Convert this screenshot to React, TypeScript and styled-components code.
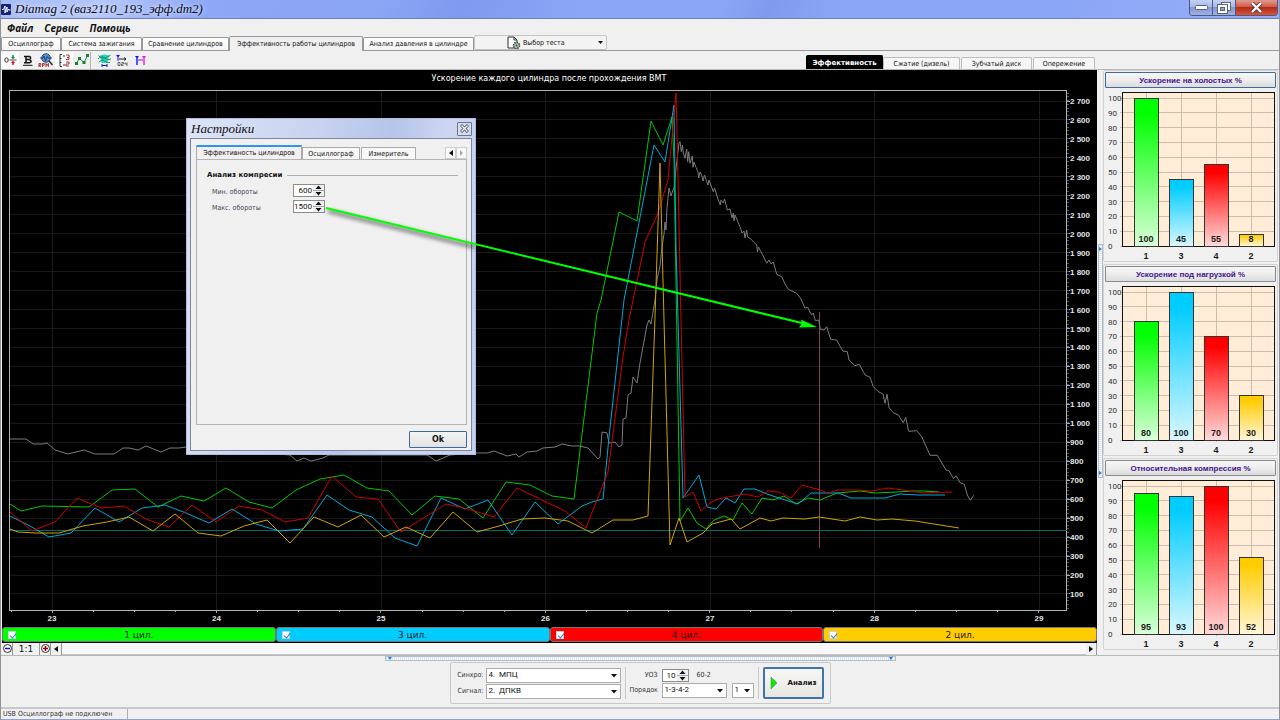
import React from 'react';
import styled, { createGlobalStyle } from 'styled-components';

const GlobalStyle = createGlobalStyle`
  * { box-sizing: border-box; }
  body { margin: 0; background: #f0f0f0; }
  button, input, select { font: inherit; color: inherit; margin: 0; }
`;

const ui = '"DejaVu Sans Condensed", "DejaVu Sans", Tahoma, sans-serif';
const sans = '"Liberation Sans", Arial, sans-serif';
const narrow = 'Roboto, "Liberation Sans", sans-serif';
const wide = '"DejaVu Sans", Verdana, sans-serif';
const script = '"Liberation Serif", "Times New Roman", serif';

const Window = styled.div`
  display: flex;
  flex-direction: column;
  min-height: 100vh;
  background: #f0f0f0;
  border-left: 1px solid #8f9196;
  border-right: 1px solid #8f9196;
  font: 7px/10px ${ui};
  color: #111;
`;

const TitleBar = styled.header`
  display: flex;
  align-items: center;
  justify-content: space-between;
  height: 19px;
  padding-right: 1px;
  border-bottom: 1px solid #6d80b3;
  background: linear-gradient(115deg, #a9bdf5 0%, #b4c6fa 8%, #8ea7f6 16%, #8ba5f5 30%, #7f9aee 36%, #8ca6f7 46%, #8ca6f7 56%, #809bee 60%, #8ca6f7 66%, #8ca6f7 82%, #96aef8 100%);
`;
const AppTitle = styled.h1`
  display: flex;
  align-items: center;
  gap: 4px;
  margin: 0;
  font: italic 13px/18px ${script};
  color: #0a0a14;
  text-shadow: 0 0 5px #fff;
`;
const WindowButtons = styled.div`
  display: flex;
  align-self: flex-start;
  border: 1px solid #4d5a80;
  border-top: 0;
  border-radius: 0 0 4px 4px;
  overflow: hidden;
`;
const WindowButton = styled.button<{ $wide?: boolean; $danger?: boolean }>`
  display: grid;
  place-items: center;
  width: ${p => (p.$wide ? 41 : 23)}px;
  height: 15px;
  padding: 0;
  border: 0;
  border-right: ${p => (p.$danger ? 0 : 1)}px solid #4d5a80;
  background: ${p => (p.$danger
    ? 'linear-gradient(#e09c90, #cf5b48 45%, #b32c18 50%, #d4553a)'
    : 'linear-gradient(#c4d0f4, #a9b9ea 45%, #8296cf 50%, #9fb0e6)')};
`;

const MenuBar = styled.nav`
  display: flex;
  gap: 11px;
  height: 17px;
  padding-left: 6px;
  font: italic bold 10px/16px "Open Sans", sans-serif;
`;
const MenuItem = styled.button`
  padding: 0;
  border: 0;
  background: none;
  color: #111;
`;

const TabStrip = styled.div`
  display: flex;
  align-items: flex-end;
  height: 15px;
  border-bottom: 1px solid #9a9a9a;
`;
const ModeTab = styled.button<{ $active?: boolean; $width: number }>`
  flex: 0 0 ${p => p.$width}px;
  height: ${p => (p.$active ? 15 : 13)}px;
  padding: 0;
  border: 1px solid #989898;
  border-bottom: 0;
  border-radius: 2px 2px 0 0;
  margin-bottom: ${p => (p.$active ? -1 : 0)}px;
  background: ${p => (p.$active ? '#f0f0f0' : 'linear-gradient(#fff, #f4f4f4)')};
  white-space: nowrap;
`;
const TestPicker = styled.button`
  display: flex;
  align-items: center;
  gap: 2px;
  width: 133px;
  height: 15px;
  padding: 0 3px 0 32px;
  border: 1px solid #c4c4c4;
  border-radius: 2px;
  background: #f3f3f3;
  span { flex: 1; text-align: left; }
`;

const ToolRow = styled.div`
  display: flex;
  align-items: flex-end;
  justify-content: space-between;
  height: 19px;
  padding-right: 183px;
  border-bottom: 1px solid #b8b8b8;
`;
const Tools = styled.div`
  display: flex;
  align-self: center;
`;
const ToolButton = styled.button<{ $on?: boolean; $gap?: boolean }>`
  display: grid;
  place-items: center;
  width: 18px;
  height: 17px;
  padding: 0;
  border: 0;
  border-right: ${p => (p.$gap ? '1px solid #b0b0b0' : 0)};
  margin-right: ${p => (p.$gap ? 4 : 0)}px;
  background: ${p => (p.$on ? '#fbfbfb' : 'none')};
`;
const ViewTabs = styled.div`
  display: flex;
  align-items: flex-end;
`;
const ViewTab = styled.button<{ $active?: boolean; $width: number }>`
  width: ${p => p.$width}px;
  height: ${p => (p.$active ? 14 : 12)}px;
  padding: 0;
  margin-right: ${p => (p.$active ? 0 : 1)}px;
  border: 1px solid ${p => (p.$active ? '#000' : '#bdbdbd')};
  border-bottom: 0;
  border-radius: 2px 2px 0 0;
  background: ${p => (p.$active ? '#000' : '#f6f6f6')};
  color: ${p => (p.$active ? '#fff' : '#111')};
  font-family: ${p => (p.$active ? wide : ui)};
  font-weight: ${p => (p.$active ? 'bold' : 'normal')};
  white-space: nowrap;
`;

const Main = styled.main`
  display: grid;
  grid-template-columns: minmax(0, 1fr) 6px 175px;
  padding: 0 1px;
`;
const ChartColumn = styled.section`
  display: flex;
  flex-direction: column;
  min-width: 0;
`;
const Scope = styled.div`
  position: relative;
  background: #000;
`;
const ScopeSvg = styled.svg`
  display: block;
  width: 100%;
  height: auto;
`;
const ArrowSvg = styled.svg`
  position: absolute;
  inset: 0;
  width: 100%;
  height: 100%;
  pointer-events: none;
`;

const ChannelRow = styled.div`
  display: grid;
  grid-template-columns: repeat(4, 1fr);
  background: #000;
  padding-bottom: 1px;
`;
const Channel = styled.label<{ $color: string }>`
  display: grid;
  grid-template-columns: 8px 1fr 8px;
  align-items: center;
  height: 15px;
  padding: 0 5px;
  border: 1px solid #777;
  border-radius: 3px;
  background: ${p => p.$color};
  font: 9px/12px ${wide};
  color: #1c1c1c;
  text-align: center;
`;
const Check = styled.input`
  appearance: none;
  position: relative;
  width: 8px;
  height: 8px;
  background: #fff;
  border: 1px solid #c4d0dc;
  &:checked::after {
    content: '';
    position: absolute;
    left: 2px;
    top: 0;
    width: 3px;
    height: 5px;
    border: solid #1d7fe0;
    border-width: 0 1px 1px 0;
    transform: rotate(40deg);
  }
`;
const ZoomRow = styled.div`
  display: flex;
  align-items: center;
  height: 12px;
  background: #f8f8f8;
  border-bottom: 1px solid #c4c4c4;
`;
const ZoomButton = styled.button<{ $width?: number }>`
  display: grid;
  place-items: center;
  width: ${p => p.$width ?? 11}px;
  height: 12px;
  padding: 0;
  border: 0;
  border-right: 1px solid #999;
  background: #f0f0f0;
  font: 9px/10px ${wide};
`;
const Spacer = styled.div`
  flex: 1;
`;

const VerticalGrip = styled.div`
  align-self: center;
  justify-self: center;
  display: flex;
  flex-direction: column;
  justify-content: space-between;
  width: 5px;
  height: 234px;
  margin-bottom: 4px;
  border: 1px solid #b4bcc4;
  background: repeating-linear-gradient(#d6e6f5 0 1px, #fafcfe 1px 2px);
`;
const SideColumn = styled.aside`
  display: flex;
  flex-direction: column;
  gap: 2px;
`;
const BarCard = styled.section`
  padding: 1px;
  border: 1px solid #d2d2d2;
  border-radius: 2px;
`;
const BarTitle = styled.button<{ $focus?: boolean }>`
  display: block;
  width: 100%;
  height: 16px;
  padding: 0;
  border: 1px solid ${p => (p.$focus ? '#3c6c9c' : '#8a8a8a')};
  border-radius: 1px;
  background: linear-gradient(#f6f6f6, #ededed 50%, #dcdcdc);
  color: #43148c;
  font: bold 8px/13px ${sans};
`;
const BarSvg = styled.svg`
  display: block;
  width: 100%;
  height: auto;
`;

const Dialog = styled.section`
  position: absolute;
  left: 184px;
  top: 48px;
  width: 290px;
  height: 337px;
  padding: 0 3px 3px;
  display: flex;
  flex-direction: column;
  background: linear-gradient(100deg, #dde4f6 0%, #c7d2f0 40%, #b7c4e8 60%, #ccd6f3 75%, #c3cff0 100%);
  border: 1px solid #b0bce0;
`;
const DialogHead = styled.div`
  display: flex;
  align-items: center;
  justify-content: space-between;
  height: 19px;
  padding-left: 1px;
`;
const DialogTitle = styled.h2`
  margin: 0;
  font: italic 13px/18px ${script};
  color: #111;
`;
const DialogClose = styled.button`
  display: grid;
  place-items: center;
  width: 15px;
  height: 14px;
  padding: 0;
  border: 1px solid #6f7688;
  border-radius: 1px;
  background: #d5dcf0;
`;
const DialogBody = styled.div`
  flex: 1;
  display: flex;
  flex-direction: column;
  align-items: flex-end;
  gap: 6px;
  padding: 6px 4px 2px 5px;
  border: 1px solid #7e8596;
  background: #f0f0f0;
`;
const DialogTabs = styled.div`
  display: flex;
  align-self: stretch;
  align-items: flex-end;
  height: 14px;
`;
const DialogTab = styled.button<{ $active?: boolean; $width: number }>`
  width: ${p => p.$width}px;
  height: ${p => (p.$active ? 14 : 12)}px;
  padding: 0;
  border: 1px solid #ababab;
  border-top: ${p => (p.$active ? '2px solid #2f93f0' : '1px solid #ababab')};
  border-bottom: 0;
  border-radius: 1px 1px 0 0;
  margin-right: ${p => (p.$active ? 0 : 1)}px;
  background: ${p => (p.$active ? '#f0f0f0' : '#f8f8f8')};
  line-height: 10px;
  white-space: nowrap;
`;
const PageButton = styled.button`
  display: grid;
  place-items: center;
  width: 11px;
  height: 12px;
  padding: 0;
  border: 1px solid #cfcfcf;
  background: #f8f8f8;
`;
const DialogPage = styled.div`
  flex: 1;
  align-self: stretch;
  display: flex;
  flex-direction: column;
  margin-top: -6px;
  padding: 10px 8px 8px 10px;
  border: 1px solid #b4b4b4;
`;
const GroupHead = styled.h3`
  display: flex;
  align-items: center;
  gap: 5px;
  margin: 0 0 2px;
  font: bold 7px/10px ${wide};
  color: #111;
  &::after { content: ''; flex: 1; border-top: 1px solid #b0b0b0; }
`;
const SettingRow = styled.div`
  display: flex;
  align-items: center;
  height: 16px;
  padding-left: 5px;
  label { width: 81px; padding-top: 4px; color: #444455; }
`;
const SpinBox = styled.div<{ $width: number }>`
  display: flex;
  width: ${p => p.$width}px;
  height: 13px;
  border: 1px solid #8c8c8c;
  background: #fff;
  input {
    appearance: textfield;
    flex: 1;
    min-width: 0;
    width: 100%;
    padding: 0 1px 0 0;
    border: 0;
    outline: 0;
    background: none;
    font: 8px/11px ${narrow};
    color: #111;
    text-align: right;
  }
  input::-webkit-inner-spin-button { display: none; }
`;
const SpinArrows = styled.svg`
  flex: none;
  width: 11px;
  height: 11px;
  background: #f0f0f0;
`;
const OkButton = styled.button`
  width: 58px;
  height: 17px;
  padding: 0;
  border: 1px solid #3c6c9c;
  border-radius: 1px;
  background: linear-gradient(#f4f4f4, #e2e2e2);
  font: bold 8px/14px ${wide};
`;

const Footer = styled.section`
  flex: 1;
  display: flex;
  flex-direction: column;
  align-items: center;
  border-top: 1px solid #b8b8b8;
  border-bottom: 2px solid #c8c8c8;
`;
const HorizontalGrip = styled.div`
  display: flex;
  justify-content: space-between;
  width: 511px;
  height: 5px;
  border: 1px solid #b4bcc4;
  background: repeating-linear-gradient(90deg, #d6e6f5 0 1px, #fafcfe 1px 2px);
`;
const Controls = styled.form`
  display: flex;
  align-items: center;
  gap: 4px;
  width: 381px;
  height: 42px;
  margin-top: 1px;
  padding: 2px 4px 2px 6px;
  border: 1px solid #c8c8c8;
  border-radius: 2px;
`;
const FieldGrid = styled.div<{ $columns: string; $gap: number }>`
  display: grid;
  grid-template-columns: ${p => p.$columns};
  align-items: center;
  gap: 1px ${p => p.$gap}px;
  label { color: #333; text-align: right; white-space: nowrap; }
`;
const Inline = styled.div`
  display: flex;
  align-items: center;
  gap: 5px;
  color: #333;
  span { padding-left: 3px; }
`;
const SelectWrap = styled.div<{ $width: number }>`
  position: relative;
  width: ${p => p.$width}px;
  select {
    appearance: none;
    display: block;
    width: 100%;
    height: 15px;
    padding: 0 2px;
    border: 1px solid #acacac;
    border-radius: 0;
    background: #fff;
    font: 8px/12px ${narrow};
    color: #111;
  }
  svg { position: absolute; right: 4px; top: 6px; pointer-events: none; }
`;
const Divider = styled.div`
  width: 1px;
  height: 32px;
  background: #c8c8c8;
`;
const AnalyzeButton = styled.button`
  display: flex;
  align-items: center;
  gap: 10px;
  width: 61px;
  height: 32px;
  padding: 0 0 0 5px;
  border: 2px solid #3f74a8;
  border-radius: 2px;
  background: linear-gradient(#f7f7f5, #e6e5df);
  font: bold 7px/10px ${wide};
`;
const StatusBar = styled.footer`
  display: flex;
  height: 11px;
  border-bottom: 1px solid #8f9fd8;
`;
const StatusCell = styled.div`
  width: 127px;
  padding-left: 2px;
  border-right: 1px solid #b0b0b0;
  color: #333;
`;

const X0 = 52;
const XSTEP = 164.5;
const Y2700 = 101;
const YSTEP = 18.96;

const rpmTrace = '10,439 26,439 33,444 43,444 47,443 55,450 68,454 84,450 95,454 114,454 123,448 129,448 138,450 146,446 161,452 170,448 179,448 186,447 290,455 297,461 304,458 311,461 323,458 329,455 427,455 436,461 443,458 450,455 475,453 487,453 494,451 507,456 516,454 519,457 527,452 537,451 543,448 555,447 562,444 572,446 580,446 588,448 598,459 600,457 602,432 607,433 609,443 615,442 619,447 622,445 623,419 626,418 628,395 631,393 633,377 637,383 640,363 647,325 649,320 651,324 655,300 657,280 660,266 662,247 664,234 665,222 666,230 667,208 669,188 671,196 673,190 674,188 677,160 679,143 680,141.7 681.3,151.7 682.5,145 683.3,153 685,158.3 686.7,149 687.7,161.7 688.7,151.7 690,163.3 692.3,156 693,167.3 694,162 696,167.3 698,172 698.7,178 700,172 702,176 703,181 704.5,175 706.7,181.7 708,185 709,180 713.3,191.7 714.5,188 718.3,200 720.3,205 721,200 723.3,203 724.5,199 727.3,210 730,209 732,218 733.3,213 734,221 735,215 740,226.7 742,233 744,231 745,238 746.7,230 747.5,237 750,238.3 756.7,245 757.5,252 758.3,247 762.7,255 766.7,263.3 769,260 771,264 773.3,262 775,268 776.7,274.3 781.7,276.7 785,284 788.3,289.3 796.7,293.3 801,299 805,308.3 807.7,307.3 810,312 811.5,315 813.3,313 815.3,320.7 818.7,320 820.3,329.3 824,330 826.7,326.7 830.7,339.3 836.7,340 842.7,351 847.3,351.7 849,360 855,365.7 859.3,364.3 865,375 870,377.3 873.3,386.7 878.3,391.7 883,394 885,403.3 887,394.3 889,407.7 893.3,412.7 898.3,415 903.3,422.7 905.7,417.3 908.7,431.3 916.7,430.7 921.7,436.7 930,455.3 937.3,455.3 946,470 949,470.7 953.3,478.3 956.3,475.7 960,482.7 964.3,484.3 967.3,495 970.3,500.3 973.7,495.3';

const traces = [
  { color: '#00c800', points: '10,504 21,511 42,506 89,507 112,490 135,489 158,507 181,496 204,501 226,488 249,502 272,508 296,490 320,479 344,475 367,488 389,491 412,515 435,496 459,499 483,518 506,482 530,485 552,496 574,499 597,313 601,300 619,212 637,221 651,121 663,145 672,117 674,160 680,521 688,508 697,523 706,529 714,520 724,516 733,520 742,503 752,514 762,498 773,500 784,496 796,504 808,498 820,500 837,493 860,491 875,493 897,492 913,491 923,491 939,492' },
  { color: '#00a8d8', points: '10,516 30,526 49,537 71,533 95,508 119,522 142,508 165,505 186,513 209,523 232,509 256,524 279,531 303,529 327,495 349,510 372,517 395,538 417,546 441,498 465,509 488,500 512,535 535,502 558,524 582,506 592,502 603,499 609,437 624,300 654,145 665,162 674,105 676,246 683,498 699,475 707,507 716,509 726,498 735,503 744,489 755,489 767,494 785,500 798,504 811,493 838,493 851,498 885,498 900,494 918,495 945,495' },
  { color: '#d00000', points: '10,512 32,531 55,522 77,498 101,508 124,506 146,519 169,527 192,505 216,522 239,506 262,510 285,522 308,518 332,476 356,497 378,499 401,532 446,504 468,509 494,517 517,488 540,499 565,511 586,528 608,472 623,357 629,320 645,242 658,213 668,180 672,137 676,93 678,177 681,320 685,497 693,492 701,511 710,503 718,499 744,494 758,497 768,491 779,492 791,498 802,485 820,490 828,493 838,490 857,490 872,491 888,488 910,491 923,493 952,492' },
  { color: '#d0a400', points: '10,529 18,532 36,533 59,533 83,526 107,522 129,517 153,531 175,514 198,533 221,536 244,526 267,520 290,543 314,517 338,527 361,515 384,537 406,527 430,538 453,512 477,532 499,526 522,519 545,518 568,521 592,533 613,520 633,520 648,516 655,317 660,163 664,320 670,545 679,518 687,542 703,533 712,524 731,519 740,529 760,518 771,521 783,518 805,519 819,517 845,521 860,517 877,520 892,519 915,521 959,528' },
];

const channels = [
  { name: '1 цил.', color: '#00ff00' },
  { name: '3 цил.', color: '#00ccff' },
  { name: '4 цил.', color: '#ff0000' },
  { name: '2 цил.', color: '#ffcc00' },
];

const barCharts = [
  { title: 'Ускорение на холостых %', values: [100, 45, 55, 8] },
  { title: 'Ускорение под нагрузкой %', values: [80, 100, 70, 30] },
  { title: 'Относительная компрессия %', values: [95, 93, 100, 52] },
];
const barNames = ['1', '3', '4', '2'];
const barCenters = [41, 76, 111, 146];

const formatRpm = (v: number) => (v >= 1000 ? `${Math.floor(v / 1000)} ${String(v % 1000).padStart(3, '0')}` : String(v));

function Oscillogram() {
  const levels = Array.from({ length: 27 }, (_, i) => 2700 - i * 100);
  const seconds = [23, 24, 25, 26, 27, 28, 29];
  return (
    <ScopeSvg viewBox="2 70 1095 557" role="img" aria-label="Ускорение каждого цилиндра после прохождения ВМТ">
      <text x="549" y="81" textAnchor="middle" fontFamily="DejaVu Sans, sans-serif" fontSize="8" fill="#fff">Ускорение каждого цилиндра после прохождения ВМТ</text>
      <g shapeRendering="crispEdges" strokeWidth="1">
        {levels.map((v, i) => (
          <line key={v} x1="10" x2="1067" y1={Y2700 + i * YSTEP} y2={Y2700 + i * YSTEP} stroke="#1a1a1a" />
        ))}
        {seconds.map((s, i) => (
          <line key={s} x1={X0 + i * XSTEP} x2={X0 + i * XSTEP} y1="91" y2="610" stroke="#1a1a1a" />
        ))}
        {levels.map((v, i) => (
          <line key={v} x1="1067" x2="1070" y1={Y2700 + i * YSTEP} y2={Y2700 + i * YSTEP} stroke="#aaa" />
        ))}
        {Array.from({ length: 137 }, (_, i) => (
          <line key={i} x1="1067" x2="1069" y1={93 + i * 3.79} y2={93 + i * 3.79} stroke="#555" />
        ))}
        {Array.from({ length: 26 }, (_, i) => (
          <line key={i} x1={11 + i * 41.1} x2={11 + i * 41.1} y1="610" y2={i % 4 === 1 ? 613 : 612} stroke="#aaa" />
        ))}
        <path d="M9.5 610.5V90.5H1066.5V610.5Z" fill="none" stroke="#b4b4b4" />
        <line x1="10" x2="1067" y1="530.5" y2="530.5" stroke="#006c6c" />
        <line x1="819.5" x2="819.5" y1="312" y2="548" stroke="#84405e" />
      </g>
      <g fill="none" strokeWidth="1" strokeLinejoin="round">
        <polyline points={rpmTrace} stroke="#7c7c7c" />
        {traces.map(t => <polyline key={t.color} points={t.points} stroke={t.color} />)}
      </g>
      <g fontFamily="Liberation Sans, sans-serif" fontWeight="bold" fontSize="8" fill="#e4e4e4">
        {levels.map((v, i) => <text key={v} x="1070" y={Y2700 + 3 + i * YSTEP}>{formatRpm(v)}</text>)}
        {seconds.map((s, i) => <text key={s} x={X0 + i * XSTEP} y="621" textAnchor="middle">{s}</text>)}
      </g>
    </ScopeSvg>
  );
}

function BarChart({ id, values }: { id: string; values: number[] }) {
  const zero = 158;
  const scale = 1.48;
  return (
    <BarSvg viewBox="0 0 171 172">
      <defs>
        {channels.map((c, i) => (
          <linearGradient key={c.name} id={`${id}-${i}`} x1="0" y1="0" x2="0" y2="1">
            <stop offset="0.1" stopColor={c.color} />
            <stop offset="1" stopColor={c.color} stopOpacity="0.15" />
          </linearGradient>
        ))}
      </defs>
      <rect x="17" y="4" width="153" height="154" fill="#ffedd8" />
      <g shapeRendering="crispEdges">
        {Array.from({ length: 11 }, (_, i) => (
          <line key={i} x1="15" x2="169" y1={zero - i * 14.8} y2={zero - i * 14.8} stroke="#cbbcac" />
        ))}
        {barCenters.map(x => <line key={x} x1={x} x2={x} y1="4" y2="160" stroke="#cbbcac" />)}
        <path d="M17.5 158.5V4.5H169.5V158.5Z" fill="none" stroke="#111" />
        {values.map((v, i) => (
          <g key={i}>
            <rect x={barCenters[i] - 12} y={zero - v * scale} width="24" height={v * scale} fill="#fff" />
            <rect x={barCenters[i] - 12} y={zero - v * scale} width="24" height={v * scale} fill={`url(#${id}-${i})`} stroke="#333" />
          </g>
        ))}
      </g>
      <g fontFamily="Roboto, sans-serif" fontSize="8" fill="#333">
        {Array.from({ length: 11 }, (_, i) => <text key={i} x="3" y={zero + 3 - i * 14.8}>{i * 10}</text>)}
      </g>
      <g fontFamily="Liberation Sans, sans-serif" fontWeight="bold" fontSize="9" fill="#1c1c1c" textAnchor="middle">
        {values.map((v, i) => <text key={i} x={barCenters[i]} y={zero - 4}>{v}</text>)}
        {barNames.map((n, i) => <text key={n} x={barCenters[i]} y={zero + 13}>{n}</text>)}
      </g>
    </BarSvg>
  );
}

const Caret = () => <svg width="6" height="4" viewBox="0 0 6 4" aria-hidden="true"><path d="M0 0h6L3 3.5z" fill="#111" /></svg>;

function Spin({ id, value, width }: { id: string; value: number; width: number }) {
  return (
    <SpinBox $width={width}>
      <input id={id} type="number" defaultValue={value} />
      <SpinArrows viewBox="0 0 11 11" aria-hidden="true">
        <path d="M0 5.5h11" stroke="#aaa" />
        <path d="M5.5 .5L8.5 4h-6zM5.5 10.5L8.5 7h-6z" fill="#111" />
      </SpinArrows>
    </SpinBox>
  );
}

function Drop({ id, width, options, label }: { id: string; width: number; options: string[]; label?: string }) {
  return (
    <SelectWrap $width={width}>
      <select id={id} aria-label={label}>{options.map(o => <option key={o}>{o}</option>)}</select>
      <Caret />
    </SelectWrap>
  );
}

function SettingsDialog() {
  return (
    <Dialog role="dialog" aria-labelledby="settings-title">
      <DialogHead>
        <DialogTitle id="settings-title">Настройки</DialogTitle>
        <DialogClose aria-label="Закрыть">
          <svg width="9" height="9" viewBox="0 0 9 9"><path d="M1 1l7 7M8 1L1 8" stroke="#555c70" strokeWidth="3" /><path d="M1.5 1.5l6 6M7.5 1.5l-6 6" stroke="#fff" strokeWidth="1.2" /></svg>
        </DialogClose>
      </DialogHead>
      <DialogBody>
        <DialogTabs role="tablist">
          <DialogTab role="tab" $active $width={106}>Эффективность цилиндров</DialogTab>
          <DialogTab role="tab" $width={58}>Осциллограф</DialogTab>
          <DialogTab role="tab" $width={55}>Измеритель</DialogTab>
          <Spacer />
          <PageButton aria-label="Назад"><svg width="4" height="6"><path d="M4 0v6L0 3z" fill="#111" /></svg></PageButton>
          <PageButton aria-label="Вперёд"><svg width="4" height="6"><path d="M0 0v6l3-3z" fill="#aaa" /></svg></PageButton>
        </DialogTabs>
        <DialogPage>
          <GroupHead>Анализ компресии</GroupHead>
          <SettingRow><label htmlFor="rpm-min">Мин. обороты</label><Spin id="rpm-min" value={600} width={32} /></SettingRow>
          <SettingRow><label htmlFor="rpm-max">Макс. обороты</label><Spin id="rpm-max" value={1500} width={32} /></SettingRow>
        </DialogPage>
        <OkButton>Ok</OkButton>
      </DialogBody>
    </Dialog>
  );
}

function ToolIcons() {
  return (
    <Tools>
      <ToolButton $on aria-label="Ноль">
        <svg width="13" height="12" viewBox="0 0 13 12"><ellipse cx="2.5" cy="6" rx="1.7" ry="2.2" fill="none" stroke="#333" /><path d="M5.5 6h7" stroke="#4a4a70" /><path d="M9 1v2.5" stroke="#0a8a2a" strokeWidth="1.4" /><path d="M7 3h4L9 5.2z" fill="#0a8a2a" /><path d="M9 8.5V11" stroke="#e00000" strokeWidth="1.4" /><path d="M7 9h4L9 6.8z" fill="#e00000" /></svg>
      </ToolButton>
      <ToolButton aria-label="Полужирный">
        <svg width="10" height="11" viewBox="0 0 10 11" fill="none" stroke="#111"><path d="M1 1.500h5.500q1.500.5 1 2-.5 1-2 1M3 1v7M1 7.800h5.500q2-.6 1.500-2-.4-1.300-2.500-1.300H3" strokeWidth="1.500" /><path d="M0 10.300h9.500" /></svg>
      </ToolButton>
      <ToolButton aria-label="Обороты">
        <svg width="16" height="15" viewBox="0 0 16 15"><circle cx="8" cy="5" r="4.300" fill="#5d93cf" stroke="#234c87" /><path d="M2 5h3l1-2 1.500 5L9 3.500l1 1.500h4" stroke="#16305c" fill="none" strokeWidth=".8" /><path d="M11 8l3.500 4" stroke="#333" strokeWidth="1.600" /><path d="M1 14v-3.500h1.800v1.700H1l1.800 1.800M4.500 14v-3.500h1.800v1.700H4.500M8 14v-3.500l1.200 2 1.200-2V14" stroke="#a02020" fill="none" strokeWidth=".9" /></svg>
      </ToolButton>
      <ToolButton $on aria-label="Шкалы">
        <svg width="11" height="13" viewBox="0 0 11 13" fill="none"><path d="M3 .5H1v12h2M1 4.500h1.500M1 8.500h1.500" stroke="#333" /><path d="M5 1v2M5 10v2" stroke="#333" /><path d="M7 1h3v2.500H8h2v2H7M7 8h3v2H7v2h3" stroke="#b02020" strokeWidth=".9" /></svg>
      </ToolButton>
      <ToolButton $gap aria-label="Точки">
        <svg width="14" height="12" viewBox="0 0 14 12"><path d="M1.500 9l3-4.500 4.500 4 3.500-7" stroke="#3a6ac0" fill="none" /><g fill="#108a10"><rect x="0" y="8" width="3" height="3" /><rect x="3" y="3" width="3" height="3" /><rect x="7.500" y="7" width="3" height="3" /><rect x="11" y="0" width="3" height="3" /></g></svg>
      </ToolButton>
      <ToolButton aria-label="Наложение">
        <svg width="13" height="13" viewBox="0 0 13 13"><path d="M2 1.500q4.500-2 9 0L9.500 9h-6z" fill="#26d6dc" /><path d="M0 5q3-4 6.500-1T13 5M.500 1.500q3 4 6 2.500T12.500 1.500M1 8.500q2.500-4 5.500-1.500T12 8.500" stroke="#189048" fill="none" /><path d="M4 11.500h5M4 10v3M9 10v3" stroke="#1515d0" /></svg>
      </ToolButton>
      <ToolButton aria-label="Сдвиг">
        <svg width="12" height="13" viewBox="0 0 12 13"><path d="M0 1h4L2.500 3v4h-1V3z" fill="#1515ff" /><path d="M3 5h7M8 3.500L10 5 8 6.500" stroke="#222" fill="none" /><path d="M2 8.500h2v3H2zM5.500 8.500h2v1.500h-2v1.500h2M9 8.500V10h2M11 8.500v3.500" stroke="#444" fill="none" strokeWidth=".8" /></svg>
      </ToolButton>
      <ToolButton aria-label="Метки">
        <svg width="11" height="11" viewBox="0 0 11 11"><path d="M0 1h4L2.700 3v7H1.300V3z" fill="#1515ff" /><path d="M7 1h4L9.700 3v7H8.300V3z" fill="#ff10e0" /><path d="M3 5h5" stroke="#8015ff" /></svg>
      </ToolButton>
    </Tools>
  );
}

export default function App() {
  return (
    <>
      <GlobalStyle />
      <Window>
        <TitleBar>
          <AppTitle>
            <svg width="10" height="11" viewBox="0 0 10 11"><rect width="10" height="11" rx="1" fill="#14247c" /><path d="M1 5.500h1.500L4 2v7l2-6v5l1.500-3 .5 1h1.500" stroke="#fff" fill="none" /></svg>
            Diamag 2 (ваз2110_193_эфф.dm2)
          </AppTitle>
          <WindowButtons>
            <WindowButton aria-label="Свернуть"><svg width="13" height="5"><rect x=".5" y=".5" width="12" height="4" rx="1" fill="#fff" stroke="#59627c" /></svg></WindowButton>
            <WindowButton aria-label="Восстановить"><svg width="14" height="12" viewBox="0 0 14 12"><rect x="4.500" y=".5" width="9" height="8" fill="#fff" stroke="#59627c" /><rect x=".5" y="2.500" width="10" height="9" fill="#fff" stroke="#59627c" /><rect x="3.500" y="5.500" width="4" height="3" fill="#8fa0d4" stroke="#59627c" /></svg></WindowButton>
            <WindowButton $wide $danger aria-label="Закрыть"><svg width="13" height="11" viewBox="0 0 13 11"><path d="M2 1l9 9M11 1L2 10" stroke="#5c3038" strokeWidth="4" /><path d="M2 1l9 9M11 1L2 10" stroke="#fff" strokeWidth="2.400" /></svg></WindowButton>
          </WindowButtons>
        </TitleBar>
        <MenuBar>
          <MenuItem>Файл</MenuItem>
          <MenuItem>Сервис</MenuItem>
          <MenuItem>Помощь</MenuItem>
        </MenuBar>
        <TabStrip role="tablist">
          <ModeTab role="tab" $width={60}>Осциллограф</ModeTab>
          <ModeTab role="tab" $width={81}>Система зажигания</ModeTab>
          <ModeTab role="tab" $width={87}>Сравнение цилиндров</ModeTab>
          <ModeTab role="tab" $active $width={134}>Эффективность работы цилиндров</ModeTab>
          <ModeTab role="tab" $width={111}>Анализ давления в цилиндре</ModeTab>
          <TestPicker>
            <svg width="14" height="14" viewBox="0 0 14 14"><path d="M1 1h6l3 3v8H1z" fill="#fff" stroke="#333" /><path d="M7 1v3h3" fill="none" stroke="#333" /><circle cx="9.500" cy="9.500" r="3" fill="#b8ccb4" stroke="#3c4a3c" strokeWidth="1.600" strokeDasharray="1.500 .8" /><circle cx="9.500" cy="9.500" r="1" fill="#3c4a3c" /></svg>
            <span>Выбор теста</span>
            <svg width="5" height="3"><path d="M0 0h5L2.500 3z" fill="#111" /></svg>
          </TestPicker>
        </TabStrip>
        <ToolRow>
          <ToolIcons />
          <ViewTabs role="tablist">
            <ViewTab role="tab" $active $width={77}>Эффективность</ViewTab>
            <ViewTab role="tab" $width={77}>Сжатие (дизель)</ViewTab>
            <ViewTab role="tab" $width={71}>Зубчатый диск</ViewTab>
            <ViewTab role="tab" $width={62}>Опережение</ViewTab>
          </ViewTabs>
        </ToolRow>
        <Main>
          <ChartColumn>
            <Scope>
              <Oscillogram />
              <SettingsDialog />
              <ArrowSvg viewBox="2 70 1095 557" aria-hidden="true">
                <defs><filter id="soft" x="-10%" y="-10%" width="120%" height="130%"><feGaussianBlur stdDeviation="2" /></filter></defs>
                <path d="M328 211L475 247" stroke="#000" strokeOpacity=".6" strokeWidth="3" filter="url(#soft)" />
                <path d="M326 208L806 324" stroke="#00ff00" strokeWidth="2" />
                <path d="M817 327L799 327.500L802 323.500L801 319.500Z" fill="#00ff00" />
              </ArrowSvg>
            </Scope>
            <ChannelRow>
              {channels.map(c => (
                <Channel key={c.name} $color={c.color}><Check type="checkbox" defaultChecked /><span>{c.name}</span></Channel>
              ))}
            </ChannelRow>
            <ZoomRow>
              <ZoomButton aria-label="Уменьшить"><svg width="9" height="9" viewBox="0 0 9 9"><circle cx="4.500" cy="4.500" r="4" fill="#fff" stroke="#333" /><path d="M2 4.500h5" stroke="#1010b0" strokeWidth="1.500" /></svg></ZoomButton>
              <ZoomButton $width={27}>1:1</ZoomButton>
              <ZoomButton aria-label="Увеличить"><svg width="9" height="9" viewBox="0 0 9 9"><circle cx="4.500" cy="4.500" r="4" fill="#fff" stroke="#333" /><path d="M2 4.500h5M4.500 2v5" stroke="#900" strokeWidth="1.500" /></svg></ZoomButton>
              <ZoomButton aria-label="Влево"><svg width="4" height="6"><path d="M4 0v6L0 3z" fill="#111" /></svg></ZoomButton>
              <Spacer />
              <ZoomButton aria-label="Вправо"><svg width="4" height="6"><path d="M0 0v6l4-3z" fill="#111" /></svg></ZoomButton>
            </ZoomRow>
          </ChartColumn>
          <VerticalGrip>
            <svg width="3" height="8"><path d="M0 2v4l3-2z" fill="#1d7fe0" /></svg>
            <svg width="3" height="8"><path d="M0 2v4l3-2z" fill="#1d7fe0" /></svg>
          </VerticalGrip>
          <SideColumn>
            {barCharts.map((c, i) => (
              <BarCard key={c.title}>
                <BarTitle $focus={i === 0}>{c.title}</BarTitle>
                <BarChart id={`bars${i}`} values={c.values} />
              </BarCard>
            ))}
          </SideColumn>
        </Main>
        <Footer>
          <HorizontalGrip>
            <svg width="8" height="3"><path d="M2 0h4L4 3z" fill="#1d7fe0" /></svg>
            <svg width="8" height="3"><path d="M2 0h4L4 3z" fill="#1d7fe0" /></svg>
          </HorizontalGrip>
          <Controls>
            <FieldGrid $columns="27px 135px" $gap={2}>
              <label htmlFor="sync">Синхро:</label>
              <Drop id="sync" width={135} options={['4.\u00a0 МПЦ']} />
              <label htmlFor="signal">Сигнал:</label>
              <Drop id="signal" width={135} options={['2.\u00a0 ДПКВ']} />
            </FieldGrid>
            <Divider />
            <FieldGrid $columns="28px 92px" $gap={4}>
              <label htmlFor="uoz">УОЗ</label>
              <Inline><Spin id="uoz" value={10} width={27} /><span>60-2</span></Inline>
              <label htmlFor="order">Порядок</label>
              <Inline>
                <Drop id="order" width={65} options={['1-3-4-2']} />
                <Drop id="first" width={22} options={['1']} label="Первый цилиндр" />
              </Inline>
            </FieldGrid>
            <Divider />
            <AnalyzeButton type="button">
              <svg width="8" height="14"><path d="M1 1v12l6-6z" fill="#00f000" stroke="#777" strokeWidth=".6" /></svg>
              Анализ
            </AnalyzeButton>
          </Controls>
        </Footer>
        <StatusBar>
          <StatusCell>USB Осциллограф не подключен</StatusCell>
        </StatusBar>
      </Window>
    </>
  );
}
